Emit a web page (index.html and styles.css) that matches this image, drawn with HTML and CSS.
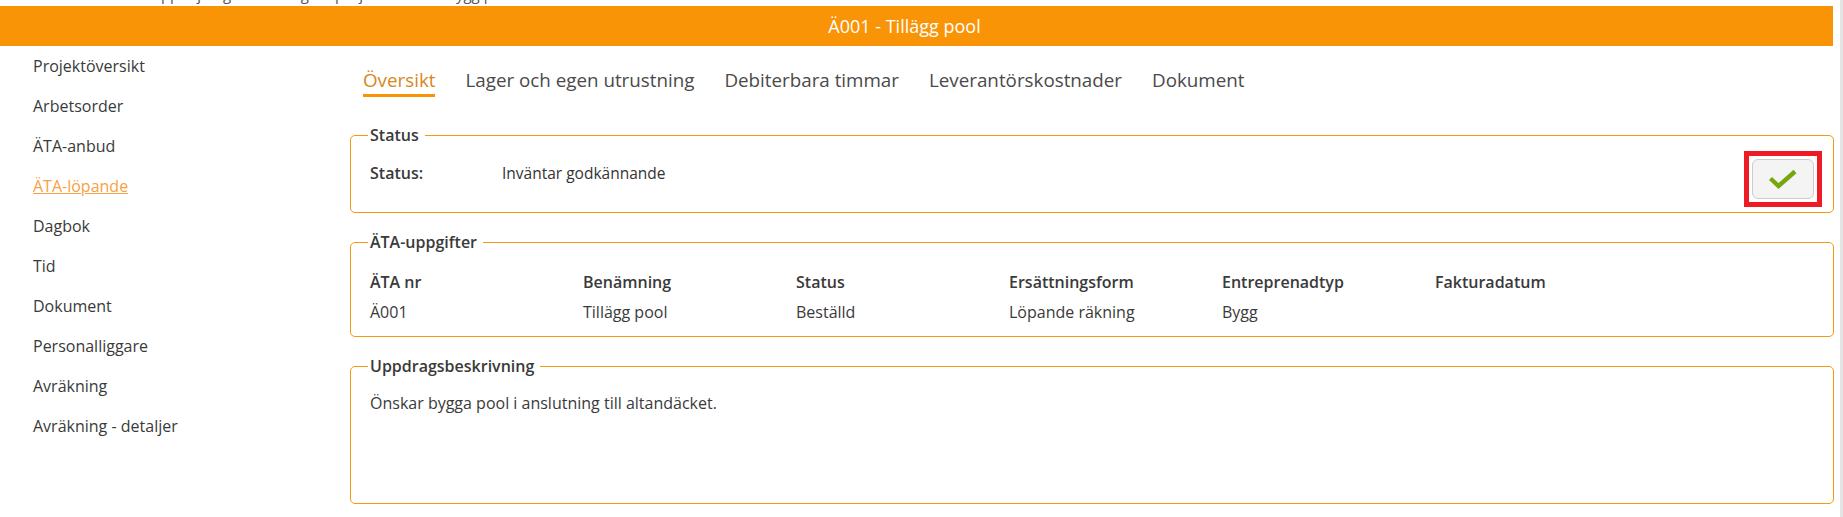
FILE: index.html
```html
<!DOCTYPE html>
<html lang="sv">
<head>
  <meta charset="UTF-8">
  <meta name="viewport" content="width=device-width, initial-scale=1.0">
  <title>Ä001 - Tillägg pool</title>
  <link rel="stylesheet" href="styles.css">
</head>
<body>
  <div class="frame">
    <div class="page">
      <div class="crumbs"><span>Uppföljning av ändringar i projektet – Villa Bygg pool</span></div>
      <div class="titlebar">Ä001 - Tillägg pool</div>

      <div class="main">
        <ul class="sidenav">
          <li><a href="#">Projektöversikt</a></li>
          <li><a href="#">Arbetsorder</a></li>
          <li><a href="#">ÄTA-anbud</a></li>
          <li><a href="#" class="active">ÄTA-löpande</a></li>
          <li><a href="#">Dagbok</a></li>
          <li><a href="#">Tid</a></li>
          <li><a href="#">Dokument</a></li>
          <li><a href="#">Personalliggare</a></li>
          <li><a href="#">Avräkning</a></li>
          <li><a href="#">Avräkning - detaljer</a></li>
        </ul>

        <div class="content">
          <div class="tabs">
            <a href="#" class="tab active">Översikt</a>
            <a href="#" class="tab">Lager och egen utrustning</a>
            <a href="#" class="tab">Debiterbara timmar</a>
            <a href="#" class="tab">Leverantörskostnader</a>
            <a href="#" class="tab">Dokument</a>
          </div>

          <fieldset class="box box-status">
            <legend>Status</legend>
            <div class="status-row">
              <div class="status-text">
                <span class="label">Status:</span>
                <span class="value">Inväntar godkännande</span>
              </div>
              <div class="highlight">
                <button class="approve" title="Godkänn">
                  <svg width="30" height="22" viewBox="0 0 30 22">
                    <path d="M2.5 10.5 L10.5 18 L27 3.5" fill="none" stroke="#77a60f" stroke-width="4.4"/>
                  </svg>
                </button>
              </div>
            </div>
          </fieldset>

          <fieldset class="box box-details">
            <legend>ÄTA-uppgifter</legend>
            <div class="details">
              <div class="head">ÄTA nr</div>
              <div class="head">Benämning</div>
              <div class="head">Status</div>
              <div class="head">Ersättningsform</div>
              <div class="head">Entreprenadtyp</div>
              <div class="head">Fakturadatum</div>
              <div>Ä001</div>
              <div>Tillägg pool</div>
              <div>Beställd</div>
              <div>Löpande räkning</div>
              <div>Bygg</div>
              <div></div>
            </div>
          </fieldset>

          <fieldset class="box">
            <legend>Uppdragsbeskrivning</legend>
            <div class="description">Önskar bygga pool i anslutning till altandäcket.</div>
          </fieldset>
        </div>
      </div>
    </div>
    <div class="scrollbar"></div>
  </div>
</body>
</html>
```

FILE: styles.css
```css
body {
  margin: 0;
  font-family: "Open Sans", "Liberation Sans", sans-serif;
  color: #3a3a3a;
  background: #fff;
}

.frame {
  display: flex;
  height: 517px;
  overflow: hidden;
}

.page {
  flex: 1;
  padding-right: 6px;
}

.scrollbar {
  width: 3px;
  background: #e4e4e4;
}

/* Breadcrumb line, cut off at the top of the window */
.crumbs {
  height: 6px;
  overflow: hidden;
  padding-left: 150px;
  font-size: 15px;
  color: #555;
}

.crumbs span {
  display: block;
  line-height: 20px;
  margin-top: -16px;
}

.titlebar {
  height: 40px;
  line-height: 40px;
  background-color: #f89406;
  color: #fff;
  text-align: center;
  font-size: 18px;
  margin-right: 1px;
  padding-right: 24px;
}

.main {
  display: flex;
}

/* Side navigation */
.sidenav {
  list-style: none;
  margin: 0;
  padding: 0 0 0 33px;
  width: 317px;
  flex-shrink: 0;
}

.sidenav li {
  line-height: 40px;
  font-size: 16px;
}

.sidenav a {
  color: #3a3a3a;
  text-decoration: none;
}

.sidenav a.active {
  color: #f7a143;
  text-decoration: underline;
}

.content {
  flex: 1;
}

/* Tabs */
.tabs {
  display: flex;
  align-items: flex-start;
  gap: 30px;
  padding: 22px 0 0 13px;
  height: 78px;
  box-sizing: border-box;
}

.tab {
  color: #4a4a4a;
  text-decoration: none;
  font-size: 18.8px;
  line-height: 24px;
  padding-bottom: 2px;
}

.tab.active {
  color: #d6881c;
  border-bottom: 3px solid #f89406;
}

/* Fieldset boxes */
.box {
  border: 1px solid #f59a10;
  border-radius: 5px;
  margin: 0 0 18px 0;
  padding: 0 11px 5px 17px;
  font-size: 16px;
}

.box legend {
  padding: 0 6px 0 2px;
  line-height: 22px;
  font-weight: 600;
  color: #3a3a3a;
}

.status-row {
  display: flex;
  justify-content: space-between;
  align-items: flex-start;
  padding-left: 2px;
}

.status-text {
  display: flex;
  padding-top: 16px;
  line-height: 22px;
}

.status-text .label {
  flex: none;
  width: 132px;
  font-weight: 600;
}

.status-text .value {
  font-size: 15.5px;
  color: #333;
}

.highlight {
  margin-top: 5px;
  border: 5px solid #ed1c24;
  padding: 3px;
}

.approve {
  display: flex;
  align-items: center;
  justify-content: center;
  width: 62px;
  height: 40px;
  background: #f4f4f4;
  border: 1px solid #cccccc;
  border-radius: 6px;
  cursor: pointer;
}

.box-details {
  padding-bottom: 0;
}

.details {
  display: grid;
  grid-template-columns: repeat(6, 213px);
  padding: 14px 0 9px 2px;
  line-height: 30px;
}

.details .head {
  font-weight: 600;
}

.description {
  padding: 15px 0 0 2px;
  line-height: 22px;
  height: 106px;
}
```
